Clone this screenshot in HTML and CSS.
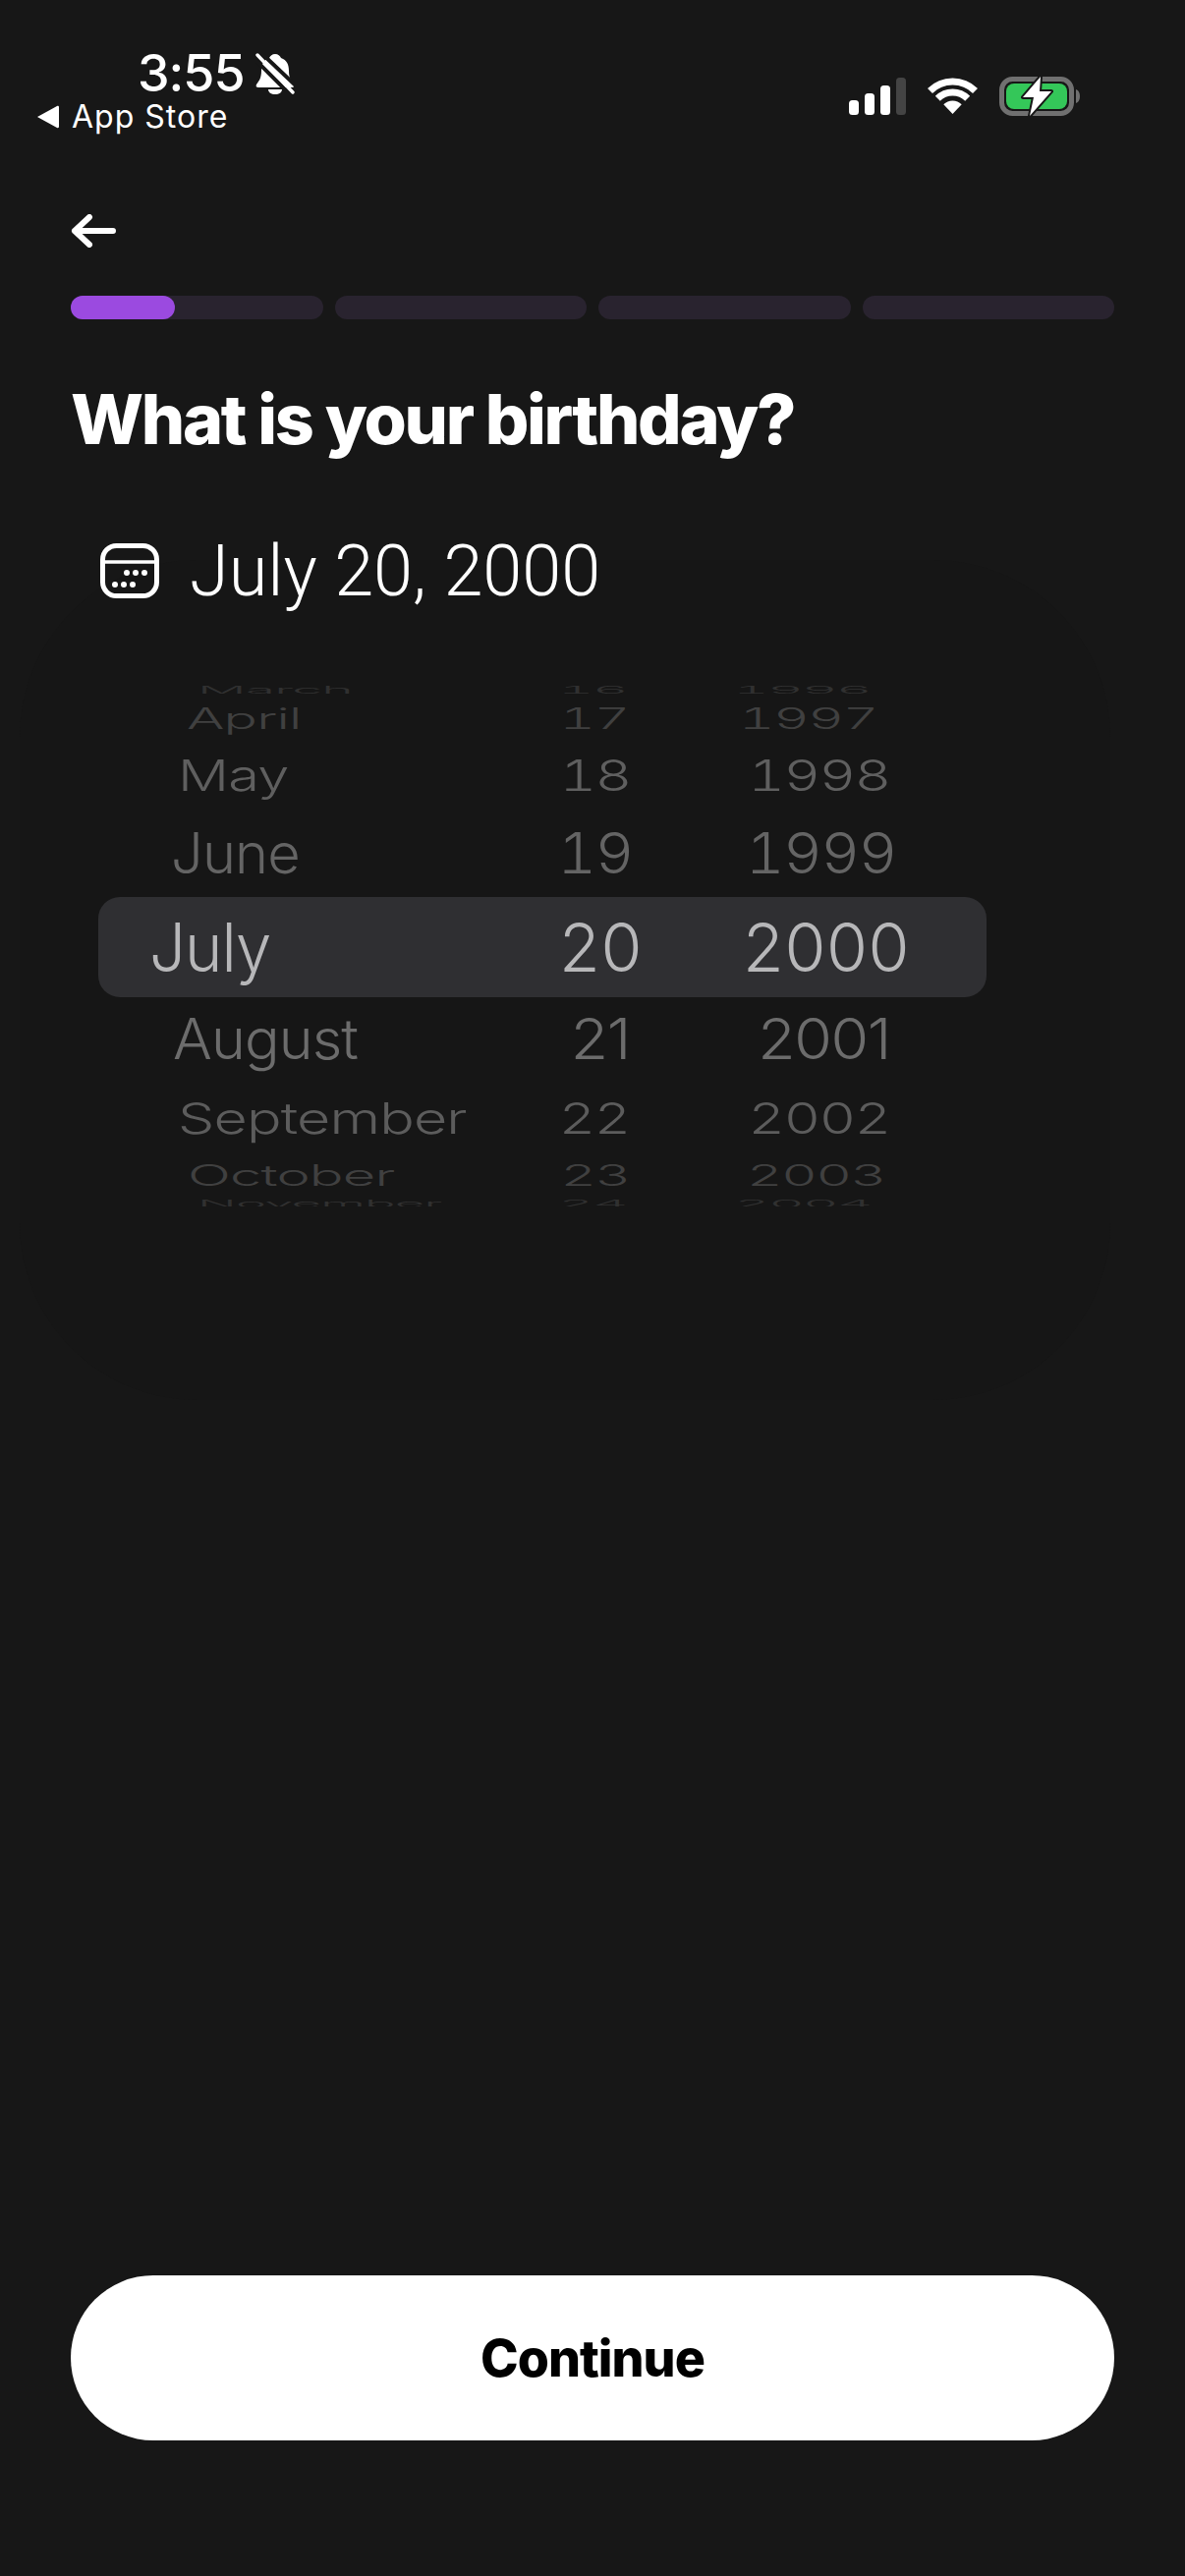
FILE: index.html
```html
<!DOCTYPE html>
<html lang="en">
  <head>
    <meta http-equiv="Content-Type" content="text/html;charset=UTF-8" />
    <meta name="viewport" content="width=device-width, initial-scale=1.0" />
    <title>What is your birthday?</title>
    <link rel="stylesheet" href="styles.css">
  </head>
  <body>
    <header class="status">
      <div class="status-left">
        <div class="clock">
          <span>3:55</span>
          <svg class="bell" viewBox="0 0 40 42" width="40" height="42">
            <path fill="#fff" d="M20 1c3 0 5 2 6 4 6 2 8 7 8 13 0 7 2 10 5 14 1 2 0 3-2 3H3c-2 0-3-1-2-3 3-4 5-7 5-14 0-6 2-11 8-13 1-2 3-4 6-4z" />
            <path fill="#fff" d="M13 37h14c0 3-3 5-7 5s-7-2-7-5z" />
            <path stroke="#171717" stroke-width="4" d="M5 -1L43 35" />
            <path stroke="#171717" stroke-width="4" d="M-2 5L36 43" />
            <path stroke="#fff" stroke-width="3.4" stroke-linecap="round" d="M2 2L38 40" />
          </svg>
        </div>
        <div class="back-app">
          <svg viewBox="0 0 22 24" width="22" height="24"><path fill="#fff" d="M0 12L20 1c1-.5 2 0 2 1v20c0 1-1 1.500-2 1z" /></svg>
          <span>App Store</span>
        </div>
      </div>
      <div class="status-right">
        <svg class="signal" viewBox="0 0 58 38" width="58" height="38">
          <rect x="0" y="23" width="10" height="15" rx="3.500" fill="#fff" />
          <rect x="16" y="16" width="10" height="22" rx="3.500" fill="#fff" />
          <rect x="32" y="8" width="10" height="30" rx="3.500" fill="#fff" />
          <rect x="48" y="0" width="10" height="38" rx="3.500" fill="#444" />
        </svg>
        <svg class="wifi" viewBox="0 0 51 38" width="51" height="38">
          <path fill="none" stroke="#fff" stroke-width="7" d="M2.500 13.500A32.500 32.500 0 0 1 48.500 13.500" />
          <path fill="none" stroke="#fff" stroke-width="7" d="M10.300 21.300A21.500 21.500 0 0 1 40.700 21.300" />
          <path fill="#fff" d="M25.500 37L16.300 27.300A13 13 0 0 1 34.700 27.300Z" />
        </svg>
        <svg class="battery" viewBox="0 0 84 42" width="84" height="42">
          <rect x="2.500" y="3.500" width="71" height="35" rx="11" fill="none" stroke="#707070" stroke-width="5" />
          <rect x="7" y="8" width="62" height="26" rx="8" fill="#34c759" />
          <path d="M78 14c3 1 4 4 4 7s-1 6-4 7z" fill="#707070" />
          <path d="M42 1L24 22H35L31 41L53 16H41Z" fill="#fff" stroke="#171717" stroke-width="4" stroke-linejoin="round" paint-order="stroke" />
        </svg>
      </div>
    </header>

    <main>
      <div class="wheel-glow"></div>

      <svg class="back" viewBox="0 0 46 34" width="46" height="34">
        <path fill="none" stroke="#fff" stroke-width="6" stroke-linecap="round" stroke-linejoin="round" d="M43 17H4M19 3L4 17L19 31" />
      </svg>

      <div class="progress">
        <div class="step"><div class="step-fill"></div></div>
        <div class="step"></div>
        <div class="step"></div>
        <div class="step"></div>
      </div>

      <h1>What is your birthday?</h1>

      <div class="date-field">
        <svg viewBox="0 0 60 56" width="60" height="56">
          <rect x="2.500" y="2.500" width="55" height="51" rx="14" fill="none" stroke="#fff" stroke-width="5" />
          <path d="M3 19H57" stroke="#fff" stroke-width="3.500" />
          <circle cx="27" cy="30" r="3" fill="#fff" />
          <circle cx="36" cy="30" r="3" fill="#fff" />
          <circle cx="45" cy="30" r="3" fill="#fff" />
          <circle cx="15" cy="42" r="3" fill="#fff" />
          <circle cx="24" cy="42" r="3" fill="#fff" />
          <circle cx="33" cy="42" r="3" fill="#fff" />
        </svg>
        <span>July 20, 2000</span>
      </div>

      <div class="wheel">
        <div class="row row-march"><span class="month">March</span><span class="day">16</span><span class="year">1996</span></div>
        <div class="row row-april"><span class="month">April</span><span class="day">17</span><span class="year">1997</span></div>
        <div class="row row-may"><span class="month">May</span><span class="day">18</span><span class="year">1998</span></div>
        <div class="row row-june"><span class="month">June</span><span class="day">19</span><span class="year">1999</span></div>
        <div class="row row-july"><span class="month">July</span><span class="day">20</span><span class="year">2000</span></div>
        <div class="row row-august"><span class="month">August</span><span class="day">21</span><span class="year">2001</span></div>
        <div class="row row-september"><span class="month">September</span><span class="day">22</span><span class="year">2002</span></div>
        <div class="row row-october"><span class="month">October</span><span class="day">23</span><span class="year">2003</span></div>
        <div class="row row-november"><span class="month">November</span><span class="day">24</span><span class="year">2004</span></div>
      </div>

      <button class="continue" type="button">Continue</button>
    </main>
  </body>
</html>
```

FILE: styles.css
```css
html, body {
  margin: 0;
  padding: 0;
}

body {
  width: 1206px;
  height: 2622px;
  overflow: hidden;
  display: flex;
  flex-direction: column;
  background-color: #171717;
  color: #fff;
  font-family: 'Inter', sans-serif;
}

/* Status bar */
.status {
  height: 219px;
  box-sizing: border-box;
  flex-shrink: 0;
  display: flex;
  justify-content: space-between;
  padding: 49px 105px 0 38px;
}

.clock {
  display: flex;
  align-items: center;
  gap: 11px;
  height: 52px;
  padding-left: 102px;
  font-size: 52px;
  line-height: 1;
  font-weight: 500;
  letter-spacing: -1px;
}

.back-app {
  display: flex;
  align-items: center;
  gap: 13px;
  height: 32px;
  margin-top: 2px;
  font-size: 32px;
  line-height: 1;
  font-weight: 400;
  letter-spacing: 1px;
}

.status-right {
  display: flex;
  gap: 22px;
  height: 42px;
  margin-top: 28px;
}

.signal, .wifi {
  margin-top: 2px;
}

/* Content */
main {
  flex: 1;
  position: relative;
  display: flex;
  flex-direction: column;
  padding: 0 72px 138px;
}

.back {
  display: block;
  flex-shrink: 0;
  margin: -1px 0 49px;
}

.progress {
  display: flex;
  gap: 12px;
  height: 24px;
  flex-shrink: 0;
}

.step {
  flex: 1;
  border-radius: 12px;
  background: #29232f;
}

.step-fill {
  width: 106px;
  height: 100%;
  border-radius: 12px;
  background: #9b4ae0;
}

h1 {
  margin: 62px 0 0;
  font-size: 70px;
  line-height: 80px;
  font-weight: 800;
  letter-spacing: -2.300px;
}

.date-field {
  display: flex;
  align-items: center;
  gap: 31px;
  height: 60px;
  margin: 84px 0 0 30px;
  font-size: 72px;
  font-weight: 300;
  font-family: 'Roboto', sans-serif;
}

/* Date wheel */
.wheel {
  position: relative;
  width: 904px;
  height: 530px;
  margin: 87px 0 0 28px;
  overflow: hidden;
}

.wheel-glow {
  position: absolute;
  z-index: -1;
  left: 20px;
  right: 76px;
  top: 351px;
  height: 855px;
  border-radius: 180px;
  background: #161616;
}

.row {
  display: grid;
  grid-template-columns: 307px 100px 180px;
  grid-template-rows: 100%;
  column-gap: 92px;
  align-items: center;
  padding: 0 79px 0 54px;
  font-size: 68px;
  font-weight: 300;
  font-variant-numeric: tabular-nums;
  white-space: nowrap;
  color: var(--ink);
}

.row span {
  display: block;
  line-height: 1;
}

.month {
  letter-spacing: -1px;
  transform-origin: left center;
  transform: translateX(var(--mx, 0)) scale(var(--msx, 1), var(--sy, 1));
}

.day, .year {
  letter-spacing: -1.500px;
  text-align: right;
  transform-origin: right center;
}

.day {
  transform: translateX(var(--dx, 0)) scale(var(--sx, 1), var(--sy, 1));
}

.year {
  transform: translateX(var(--yx, 0)) scale(var(--sx, 1), var(--sy, 1));
}

.row-march {
  height: 8px;
  --ink: #303030;
  --sx: .82;
  --msx: .81;
  --sy: .16;
  --mx: 47px;
  --dx: -15px;
  --yx: -39px;
}

.row-april {
  height: 50px;
  --ink: #404040;
  --sx: .83;
  --msx: .84;
  --sy: .43;
  --mx: 36px;
  --dx: -13px;
  --yx: -32px;
}

.row-may {
  height: 66px;
  --ink: #5f5f5f;
  --sx: .85;
  --msx: .85;
  --sy: .65;
  --mx: 27px;
  --dx: -11px;
  --yx: -19px;
}

.row-june {
  height: 91px;
  --ink: #646464;
  --sx: .9;
  --msx: .85;
  --sy: .84;
  --mx: 20px;
  --dx: -9px;
  --yx: -13px;
}

.row-july {
  height: 102px;
  border-radius: 22px;
  background: #2f2f32;
  --ink: #b7b7b9;
  --msx: .96;
  --mx: -2px;
}

.row-august {
  height: 84px;
  font-variant-numeric: normal;
  --ink: #6c6c6c;
  --sx: .92;
  --msx: .87;
  --sy: .84;
  --mx: 22px;
  --dx: -12px;
  --yx: -19px;
}

.row-september {
  height: 78px;
  --ink: #5c5c5c;
  --sx: .85;
  --msx: .87;
  --sy: .65;
  --mx: 27px;
  --dx: -12px;
  --yx: -19px;
}

.row-october {
  height: 38px;
  --ink: #404040;
  --sx: .83;
  --msx: .85;
  --sy: .43;
  --mx: 37px;
  --dx: -12px;
  --yx: -24px;
}

.row-november {
  height: 20px;
  --ink: #303030;
  --sx: .82;
  --msx: .77;
  --sy: .16;
  --mx: 47px;
  --dx: -15px;
  --yx: -38px;
}

.continue {
  display: block;
  width: 100%;
  height: 168px;
  margin-top: auto;
  flex-shrink: 0;
  padding: 0;
  border: none;
  border-radius: 84px;
  background: #fff;
  color: #000;
  font-family: 'Inter', sans-serif;
  font-size: 52px;
  font-weight: 800;
  letter-spacing: -1px;
}
```
